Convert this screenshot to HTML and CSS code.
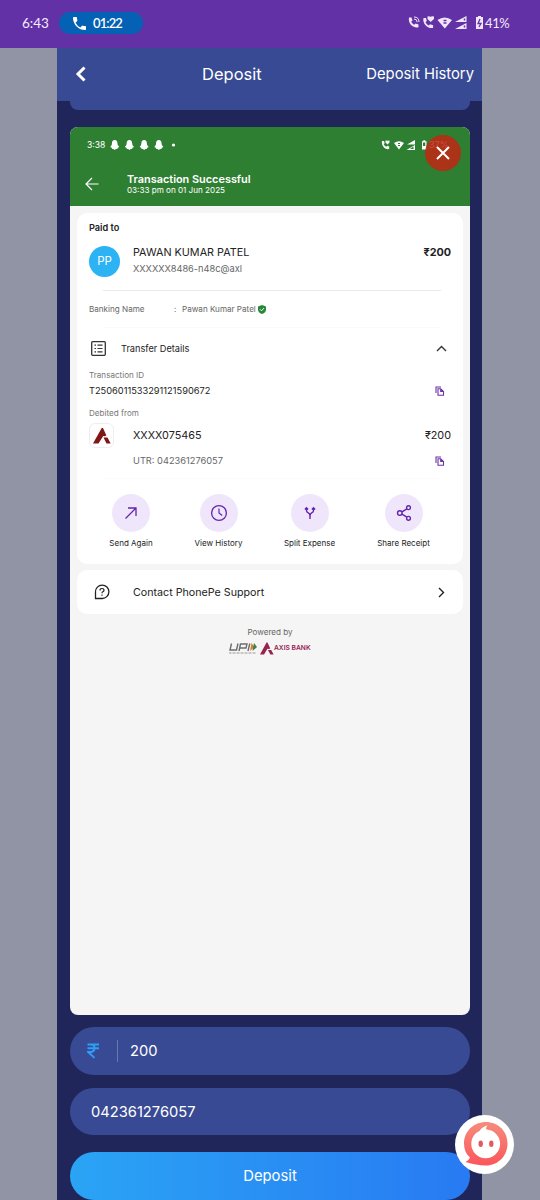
FILE: index.html
```html
<!DOCTYPE html>
<html lang="en">
<head>
<meta charset="utf-8">
<title>Deposit</title>
<link rel="stylesheet" href="styles.css">
</head>
<body>
<div class="status">
  <span class="clock">6:43</span>
  <span class="call"><svg class="phone" viewBox="3 3 18 18"><path fill="#fff" d="M6.600 10.800a15 15 0 0 0 6.600 6.600l2.200-2.200a1 1 0 0 1 1-.24 11.400 11.400 0 0 0 3.600.57 1 1 0 0 1 1 1V20a1 1 0 0 1-1 1A17 17 0 0 1 3 4a1 1 0 0 1 1-1h3.500a1 1 0 0 1 1 1c0 1.250.2 2.450.57 3.570a1 1 0 0 1-.25 1.020z"/></svg><span>01:22</span></span>
  <svg class="status-icons" width="78" height="16" viewBox="0 0 78 16">
    <g fill="#f0e6fa">
      <path d="M2 2.500h2.500l1 3-1.300 1.200a8 8 0 0 0 3 3L8.500 8.400l3 1v2.800C6 13.500.8 8.500 2 2.500z"/>
      <path d="M16.500 3h2.500l.8 3-1.300 1.200a8 8 0 0 0 3.300 3.300l1.300-1.300 3 1v2.800C20.500 14 15.200 8.500 16.500 3z"/>
      <path d="M20.500 1.500q1.500-.5 3 .2q1.500-.7 3.500-.2v2.500l-3.300 3-3.200-3z"/>
      <path d="M30.500 5q7-5 14.500 0l-7.200 8.500z"/>
      <path d="M59.500 1v6H48zM59.500 8v6H48z"/>
      <path d="M69 2h2V1h3v1h2v12h-7z"/>
    </g>
    <path d="M7 4q3.200 0 3.200 3.200M7 2q5 0 5 5" fill="none" stroke="#f0e6fa"/>
    <path d="M36.500 5.500h3M36.500 8h3M57.500 3.500v2M57.500 10.500v2" stroke="#6331a6" stroke-width="1.500"/>
    <path d="M73 4l-2 4.500h3L72 12" fill="none" stroke="#6331a6" stroke-width="1.300"/>
  </svg>
  <span class="battery">41%</span>
</div>

<div class="app">
  <div class="header">
    <svg class="back" width="12" height="18" viewBox="0 0 12 18"><path d="M9.500 2.500L3 9l6.500 6.500" fill="none" stroke="#fff" stroke-width="3"/></svg>
    <span class="title">Deposit</span>
    <span class="history">Deposit History</span>
  </div>
  <div class="panel-end"></div>

  <div class="receipt">
    <div class="success">
      <div class="mini-status">
        <span class="mini-time">3:38</span>
        <svg width="70" height="12" viewBox="0 0 70 12">
          <defs><path id="ghost" fill="#fff" d="M4.700 1C2.800 1 2 2.400 2 4L1.700 6 .2 8l1.500.8.5 1.200h1.300l1.200 1 1.300-1h1.300l.5-1.200L9.300 8 7.700 6l-.3-2C7.400 2.400 6.600 1 4.700 1z"/></defs>
          <use href="#ghost"/><use href="#ghost" x="14.700"/><use href="#ghost" x="29.400"/><use href="#ghost" x="44.100"/>
          <circle cx="63.500" cy="6" r="1.600" fill="#fff"/>
        </svg>
        <svg class="mini-right" width="48" height="12" viewBox="0 0 48 12">
          <path fill="#fff" d="M1 2h2l.7 2.200-1 1a7 7 0 0 0 2.500 2.500l1-1 2 .8V10C4 11 0 6.500 1 2zM4.500 1.500l2 .3 2-.3v2L6.500 5.500l-2-2zM13 4q5-3.500 10 0l-5 6.500z"/>
          <path fill="#fff" d="M34 1v4.500h-8zM41 2.200h1.300V1.300h1.900v.9h1.300V10.500H41zM34 6v5h-8.500z"/>
          <path fill="#2f7f33" d="M17 4h2v1h-2zM17 6h2v1h-2zM32.500 7.500v2.500h-3.500zM42 3.500h2.300V7H42z"/>
        </svg>
        <span class="mini-pct">37%</span>
      </div>
      <div class="success-row">
        <svg class="arrow" width="14" height="14" viewBox="0 0 14 14"><path d="M13.500 7H1M7 1L1 7l6 6" fill="none" stroke="#fff" stroke-width="1.200"/></svg>
        <div class="success-text"><div class="ok">Transaction Successful</div><div class="when">03:33 pm on 01 Jun 2025</div></div>
      </div>
      <div class="close"><svg width="16" height="16" viewBox="0 0 16 16"><path d="M2 2l12 12M14 2L2 14" stroke="#fff" stroke-width="2"/></svg></div>
    </div>

    <div class="card">
      <div class="paid">Paid to</div>
      <div class="payee">
        <div class="avatar">PP</div>
        <div class="payee-text"><div class="name">PAWAN KUMAR PATEL</div><div class="vpa">XXXXXX8486-n48c@axl</div></div>
        <div class="amount">₹200</div>
      </div>
      <div class="rule"></div>
      <div class="banking"><span class="bank-label">Banking Name</span><span class="colon">:</span><span class="bank-name">Pawan Kumar Patel</span>
        <svg width="8" height="9" viewBox="0 0 8 9"><path d="M4 0l4 1.400v3Q8 7.500 4 9 0 7.500 0 4.400v-3z" fill="#28883a"/><path d="M2 4.300l1.500 1.500 2.500-2.700" fill="none" stroke="#fff"/></svg></div>
      <div class="rule faint"></div>
      <div class="transfer">
        <svg width="15" height="15" viewBox="0 0 15 15"><rect x=".7" y=".7" width="13.600" height="13.600" rx="1" fill="none" stroke="#333" stroke-width="1.300"/><path d="M3.500 4.200h1.500M3.500 7.500h1.500M3.500 10.800h1.500M6.500 4.200h5M6.500 7.500h5M6.500 10.800h5" stroke="#333" stroke-width="1.200"/></svg>
        <span class="transfer-label">Transfer Details</span>
        <svg class="chev-up" width="11" height="7" viewBox="0 0 11 7"><path d="M1 6l4.500-4.500L10 6" fill="none" stroke="#333" stroke-width="1.400"/></svg>
      </div>
      <div class="small-label">Transaction ID</div>
      <div class="tid"><span>T2506011533291121590672</span>
        <svg class="copy" width="10" height="10" viewBox="0 0 10 10"><path d="M1 7V1h5M3 9.300V2.800h2.700L8.500 5.500v3.800zM5.700 2.800v2.700h2.800" fill="none" stroke="#6b32ac" stroke-width="1.100"/></svg></div>
      <div class="small-label debit-label">Debited from</div>
      <div class="account">
        <div class="axis"><svg width="18" height="16" viewBox="0 0 18 16"><path d="M8.700 0h1.300l3.400 7.500-1.800.7-1.400-.2L5.500 15.500H0zM10.500 9.500h4l3.200 6h-4.200z" fill="#7e1716"/></svg></div>
        <span class="acct">XXXX075465</span><span class="acct-amount">₹200</span>
      </div>
      <div class="utr"><span>UTR: 042361276057</span>
        <svg class="copy" width="10" height="10" viewBox="0 0 10 10"><path d="M1 7V1h5M3 9.300V2.800h2.700L8.500 5.500v3.800zM5.700 2.800v2.700h2.800" fill="none" stroke="#6b32ac" stroke-width="1.100"/></svg></div>
      <div class="rule faint"></div>
      <div class="actions">
        <div class="action"><div class="disc"><svg viewBox="0 0 18 18"><path d="M3.500 14.500L14 4M6 4h8v8" fill="none" stroke="#6426ad" stroke-width="1.300"/></svg></div><span>Send Again</span></div>
        <div class="action"><div class="disc"><svg viewBox="0 0 18 18"><circle cx="9" cy="9" r="7.400" fill="none" stroke="#6426ad" stroke-width="1.300"/><path d="M9 4.500V9l3.200 2.500" fill="none" stroke="#6426ad" stroke-width="1.200"/></svg></div><span>View History</span></div>
        <div class="action"><div class="disc"><svg viewBox="0 0 18 18"><path d="M5.500 4v2.500Q5.500 8 7 8.700q2 1 2 3V15M12.500 4v2.500q0 1.500-1.500 2.200-2 1-2 3M3.900 5.500L5.500 3.800l1.600 1.700M10.900 5.500L12.500 3.800l1.600 1.700" fill="none" stroke="#6426ad" stroke-width="1.400"/></svg></div><span>Split Expense</span></div>
        <div class="action"><div class="disc"><svg viewBox="0 0 18 18"><g fill="none" stroke="#6426ad" stroke-width="1.400"><circle cx="4.800" cy="9" r="2.300"/><circle cx="13.500" cy="3.700" r="1.900"/><circle cx="13.500" cy="14.300" r="1.900"/><path d="M7 7.800l4.900-3M7 10.200l4.900 3"/></g></svg></div><span>Share Receipt</span></div>
      </div>
    </div>

    <div class="support">
      <svg width="16" height="16" viewBox="0 0 16 16"><path d="M1.500 14.500V8A6.700 6.700 0 1 1 8 14.500z" fill="none" stroke="#222" stroke-width="1.300"/><path d="M6 6.500q0-2 2-2t2 1.700q0 1-1.200 1.600-.8.400-.8 1.500M8 10.500v1.200" fill="none" stroke="#222" stroke-width="1.200"/></svg>
      <span class="support-label">Contact PhonePe Support</span>
      <svg class="chev-right" width="7" height="11" viewBox="0 0 7 11"><path d="M1 1l4.500 4.500L1 10" fill="none" stroke="#222" stroke-width="1.400"/></svg>
    </div>
    <div class="powered">Powered by</div>
    <div class="brands">
      <svg width="30" height="13" viewBox="0 0 30 13"><path d="M3.500 1.500L2 8h6.500L10 1.500M11 9l1.500-7H19l-1 4h-6M20 9l1.800-7.500" fill="none" stroke="#6b6d70" stroke-width="1.400"/><path d="M23.500 1l3 4-4.500 4z" fill="#e8772e"/><path d="M26 1l3 4-4.500 4z" fill="#368448"/><path d="M1 11h27" stroke="#999" stroke-width="1" stroke-dasharray="2 .5 1 .5"/></svg>
      <svg class="axis-mark" width="14" height="13" viewBox="0 0 15 13"><path d="M7 0h1l3 6.500-1.500.5-1.500-.3L4.300 13H0zM8.500 8H12l2.600 5h-3.500z" fill="#972350"/></svg>
      <span class="axis-name">AXIS BANK</span>
    </div>
  </div>

  <div class="field amount-field">
    <svg width="12" height="16" viewBox="0 0 12 16"><path d="M.5 1.500h11.500M.5 5.300h11.500M.5 1.500H4q3.500 0 3.500 3.600T4 8.900H1.200l6.300 6" fill="none" stroke="#2e9df5" stroke-width="2"/></svg>
    <span class="sep"></span><span class="value">200</span>
  </div>
  <div class="field ref-field">042361276057</div>
  <div class="submit">Deposit</div>
</div>

<div class="chat">
  <svg width="59" height="59" viewBox="0 0 59 59"><defs><linearGradient id="coral" x2="0" y2="1"><stop stop-color="#f58d7c"/><stop offset="1" stop-color="#fb555b"/></linearGradient></defs>
    <path d="M31 7C43 7 52.500 16 52.500 28.500S43 50.500 31 50.500C24 50.500 18 49 10.500 47Q14 45.500 15 42.500C11 39 9 34.500 9 28.500 9 16 19 7 31 7z" fill="url(#coral)"/>
    <path d="M31.500 14.500Q30.500 12.500 32.500 10.500 27 11.500 24.500 16C19.500 18 16.300 23 16.300 29A14.400 14.400 0 1 0 31.500 14.500z" fill="#fff"/>
    <ellipse cx="25.700" cy="28.700" rx="2.200" ry="3.300" fill="#df5b61"/><ellipse cx="36.300" cy="28.700" rx="2.200" ry="3.300" fill="#df5b61"/></svg>
</div>
</body>
</html>
```
FILE: styles.css
```css
* { box-sizing: border-box; }
body { margin: 0; width: 540px; height: 1200px; overflow: hidden; background: #9194a4; font-family: Inter, sans-serif; color: #222; position: relative; }
svg { display: block; flex: none; }
span, .ok, .when, .name, .vpa { white-space: nowrap; }

.status { height: 48px; background: #6331a6; display: flex; align-items: center; padding: 0 30px 2px 22px; font: 13px Lato, sans-serif; color: #f4ebfc; }
.clock { width: 37px; font-size: 13.500px; }
.call { width: 84px; height: 22px; border-radius: 11px; background: #0461b4; display: flex; align-items: center; gap: 7px; padding-left: 14px; color: #fff; font-weight: 600; letter-spacing: -.9px; }
.phone { width: 13px; height: 13px; }
.status-icons { margin-left: auto; }
.battery { width: 25px; letter-spacing: -.4px; }

.app { width: 425px; height: 1152px; margin-left: 57px; background: #21265a; }
.header { height: 53px; background: #384a93; color: #fff; display: flex; align-items: center; padding: 0 8px 2px 18px; }
.title { margin-left: 115px; font-size: 16.500px; }
.history { margin-left: auto; font-size: 14.800px; }
.panel-end { height: 9px; margin: 0 12px 0 13px; background: #384a93; border-radius: 0 0 8px 8px; }

.receipt { margin: 17px 12px 0 13px; height: 888px; border-radius: 8px; background: #f5f5f5; overflow: hidden; }
.success { height: 79px; background: #2f7f33; color: #fff; position: relative; }
.mini-status { height: 35px; display: flex; align-items: center; padding-left: 17px; font-size: 8.500px; }
.mini-time { width: 23px; }
.mini-right { margin-left: auto; }
.mini-pct { width: 41px; font-size: 9px; }
.success-row { display: flex; align-items: center; height: 43px; padding-left: 15px; }
.success-text { margin-left: 28px; }
.ok { font-size: 10.900px; font-weight: 600; line-height: 12px; }
.when { font-size: 8.100px; line-height: 10px; }
.close { position: absolute; right: 9px; top: 8px; width: 36px; height: 36px; border-radius: 50%; background: rgba(198, 34, 18, .82); display: flex; align-items: center; justify-content: center; }

.card { margin: 7px 7px 0; height: 351px; border-radius: 10px; background: #fff; padding: 0 12px; }
.paid { height: 30px; line-height: 30px; font-size: 9.200px; font-weight: 600; }
.payee { height: 37px; display: flex; align-items: center; }
.avatar { width: 31px; height: 31px; border-radius: 50%; background: #2bb3f4; color: #fff; font-size: 11.500px; text-align: center; line-height: 31px; }
.payee-text { margin: 0 auto 3px 13px; }
.name { font-size: 10.800px; line-height: 16px; }
.vpa { font-size: 9.250px; line-height: 15px; color: #666; }
.amount { font-size: 10.800px; font-weight: 700; margin-bottom: 19px; }
.rule { height: 1px; background: #eaeaea; margin: 10px 10px 0 14px; }
.banking { height: 36px; display: flex; align-items: center; font-size: 8.100px; color: #666; }
.bank-label { width: 85px; }
.colon { width: 8px; }
.bank-name { margin-right: 2px; }
.faint { background: #fafafa; margin-top: 0; }
.transfer { height: 40px; display: flex; align-items: center; padding: 0 4px 0 2px; }
.transfer-label { font-size: 9.200px; margin-left: 15px; }
.chev-up { margin-left: auto; }
.small-label { font-size: 8.100px; line-height: 15px; height: 15px; color: #777; }
.tid, .utr { height: 15px; display: flex; align-items: center; font-size: 9.250px; }
.copy { margin: 0 6px 0 auto; }
.debit-label { margin-top: 8px; }
.account { height: 29px; display: flex; align-items: center; font-size: 10.800px; }
.axis { width: 25px; height: 25px; border: 1px solid #eee; border-radius: 6px; display: flex; align-items: center; justify-content: center; }
.acct { margin-left: 19px; }
.acct-amount { margin-left: auto; }
.utr { height: 21px; padding-left: 44px; color: #666; }
.utr + .rule { margin-top: 7px; }
.actions { display: grid; grid-template-columns: 84px 91px 91px 97px; padding-top: 15px; }
.action { display: flex; flex-direction: column; align-items: center; font-size: 8px; }
.disc { width: 38px; height: 38px; border-radius: 50%; background: #f0e6fb; display: flex; align-items: center; justify-content: center; margin-bottom: 6px; }
.disc svg { width: 18px; height: 18px; }

.support { margin: 6px 7px 0; height: 44px; border-radius: 10px; background: #fff; display: flex; align-items: center; padding: 0 18px 0 17px; }
.support-label { font-size: 10.700px; margin-left: 23px; }
.chev-right { margin-left: auto; }
.powered { text-align: center; font-size: 8.100px; line-height: 14px; margin-top: 11px; color: #666; }
.brands { display: flex; align-items: center; margin: 3px 0 0 158px; }
.axis-mark { margin-left: 2px; }
.axis-name { font-size: 6.700px; font-weight: 600; color: #972350; line-height: 12px; padding-bottom: 1px; }

.field { margin: 12px 12px 0 13px; height: 48px; border-radius: 24px; background: #384a93; color: #fff; display: flex; align-items: center; font-size: 14.700px; }
.amount-field { padding-left: 17px; }
.sep { width: 1px; height: 22px; background: #6978ae; margin: 0 12px 0 18px; }
.value { padding-bottom: 1px; }
.ref-field { height: 47px; margin-top: 13px; padding-left: 21px; }
.submit { margin: 17px 12px 0 13px; height: 48px; border-radius: 24px; background: linear-gradient(90deg, #2aa4f5, #287af2); color: #fff; text-align: center; font-size: 14.800px; line-height: 48px; }
.chat { position: absolute; left: 455px; top: 1115px; width: 59px; height: 59px; border-radius: 50%; background: #fff; overflow: hidden; }
```
